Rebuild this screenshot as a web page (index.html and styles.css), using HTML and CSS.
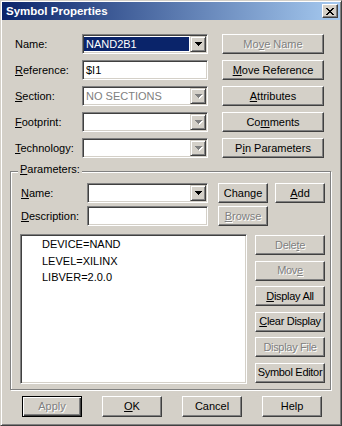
FILE: index.html
```html
<!DOCTYPE html>
<html lang="en">
<head>
    <meta charset="UTF-8">
    <title>Symbol Properties</title>
    <link rel="stylesheet" href="styles.css">
</head>
<body>
<div class="window">
    <div class="titlebar">
        <span class="title">Symbol Properties</span>
        <button class="close">
            <svg width="8" height="7" viewBox="0 0 8 7" shape-rendering="crispEdges"><path d="M0 0h2v1H0z M6 0h2v1H6z M1 1h2v1H1z M5 1h2v1H5z M2 2h4v1H2z M3 3h2v1H3z M2 4h4v1H2z M1 5h2v1H1z M5 5h2v1H5z M0 6h2v1H0z M6 6h2v1H6z" fill="#000"/></svg>
        </button>
    </div>

    <div class="content">
        <div class="fields">
            <span class="label">Name:</span>
            <div class="field combo">
                <span class="combo-text selected">NAND2B1</span>
                <span class="drop"><svg width="7" height="4" viewBox="0 0 7 4" shape-rendering="crispEdges"><path d="M0 0h7v1H0z M1 1h5v1H1z M2 2h3v1H2z M3 3h1v1H3z" fill="#000"/></svg></span>
            </div>
            <button class="btn disabled">Mo<u>v</u>e Name</button>

            <span class="label"><u>R</u>eference:</span>
            <div class="field text">$I1</div>
            <button class="btn"><u>M</u>ove Reference</button>

            <span class="label"><u>S</u>ection:</span>
            <div class="field combo">
                <span class="combo-text grey">NO SECTIONS</span>
                <span class="drop off"><svg width="8" height="5" viewBox="0 0 8 5" shape-rendering="crispEdges"><path d="M1 1h7v1H1z M2 2h5v1H2z M3 3h3v1H3z M4 4h1v1H4z" fill="#fff"/><path d="M0 0h7v1H0z M1 1h5v1H1z M2 2h3v1H2z M3 3h1v1H3z" fill="#808080"/></svg></span>
            </div>
            <button class="btn"><u>A</u>ttributes</button>

            <span class="label"><u>F</u>ootprint:</span>
            <div class="field combo">
                <span class="combo-text"></span>
                <span class="drop off"><svg width="8" height="5" viewBox="0 0 8 5" shape-rendering="crispEdges"><path d="M1 1h7v1H1z M2 2h5v1H2z M3 3h3v1H3z M4 4h1v1H4z" fill="#fff"/><path d="M0 0h7v1H0z M1 1h5v1H1z M2 2h3v1H2z M3 3h1v1H3z" fill="#808080"/></svg></span>
            </div>
            <button class="btn">Co<u>m</u>ments</button>

            <span class="label"><u>T</u>echnology:</span>
            <div class="field combo">
                <span class="combo-text"></span>
                <span class="drop off"><svg width="8" height="5" viewBox="0 0 8 5" shape-rendering="crispEdges"><path d="M1 1h7v1H1z M2 2h5v1H2z M3 3h3v1H3z M4 4h1v1H4z" fill="#fff"/><path d="M0 0h7v1H0z M1 1h5v1H1z M2 2h3v1H2z M3 3h1v1H3z" fill="#808080"/></svg></span>
            </div>
            <button class="btn">P<u>i</u>n Parameters</button>
        </div>

        <div class="group">
            <span class="legend"><u>P</u>arameters:</span>
            <div class="params">
                <span class="label"><u>N</u>ame:</span>
                <div class="field combo">
                    <span class="combo-text"></span>
                    <span class="drop"><svg width="7" height="4" viewBox="0 0 7 4" shape-rendering="crispEdges"><path d="M0 0h7v1H0z M1 1h5v1H1z M2 2h3v1H2z M3 3h1v1H3z" fill="#000"/></svg></span>
                </div>
                <button class="btn">Change</button>
                <button class="btn"><u>A</u>dd</button>

                <span class="label"><u>D</u>escription:</span>
                <div class="field text"></div>
                <button class="btn disabled"><u>B</u>rowse</button>
            </div>

            <div class="list-row">
                <div class="listbox">
                    <div class="item">DEVICE=NAND</div>
                    <div class="item">LEVEL=XILINX</div>
                    <div class="item">LIBVER=2.0.0</div>
                </div>
                <div class="side">
                    <button class="btn disabled">Dele<u>t</u>e</button>
                    <button class="btn disabled">Mov<u>e</u></button>
                    <button class="btn"><u>D</u>isplay All</button>
                    <button class="btn"><u>C</u>lear Display</button>
                    <button class="btn disabled">Display File</button>
                    <button class="btn">Symbol Editor</button>
                </div>
            </div>
        </div>

        <div class="footer">
            <button class="btn default disabled">Apply</button>
            <button class="btn"><u>O</u>K</button>
            <button class="btn">Cancel</button>
            <button class="btn">Help</button>
        </div>
    </div>
</div>
</body>
</html>
```

FILE: styles.css
```css
html, body {
    margin: 0;
}
body {
    background: #d4d0c8;
    font: 11px/13px "Liberation Sans", Arial, sans-serif;
    color: #000;
}
.window {
    width: 342px;
    height: 426px;
    box-sizing: border-box;
    border: 1px solid;
    border-color: #d4d0c8 #404040 #404040 #d4d0c8;
    box-shadow: inset 1px 1px #fff, inset -1px -1px #808080;
    padding: 1px;
    background: #d4d0c8;
}
.titlebar {
    height: 18px;
    display: flex;
    align-items: center;
    padding: 0 2px 0 4px;
    background: linear-gradient(to right, #0a246a, #a6caf0);
}
.title {
    flex: 1;
    color: #fff;
    font-weight: bold;
    font-size: 11.5px;
}
.close {
    width: 16px;
    height: 14px;
    box-sizing: border-box;
    padding: 0;
    display: flex;
    align-items: center;
    justify-content: center;
    background: #d4d0c8;
    border: 1px solid;
    border-color: #fff #404040 #404040 #fff;
    box-shadow: inset -1px -1px #808080;
}
.content {
    padding: 14px 0 0 13px;
}

/* shared controls */
.btn {
    box-sizing: border-box;
    height: 20px;
    padding: 0;
    font: inherit;
    color: #000;
    white-space: nowrap;
    background: #d4d0c8;
    border: 1px solid;
    border-color: #fff #404040 #404040 #fff;
    box-shadow: inset -1px -1px #808080;
}
.btn.disabled {
    color: #808080;
    text-shadow: 1px 1px 0 #fff;
}
.btn.default {
    border-color: #000;
    box-shadow: inset 1px 1px #fff, inset -1px -1px #404040, inset -2px -2px #808080;
}
.field {
    box-sizing: border-box;
    height: 20px;
    border: 1px solid;
    border-color: #808080 #fff #fff #808080;
    box-shadow: inset 1px 1px #404040, inset -1px -1px #d4d0c8;
    background: #fff;
}
.field.text {
    padding: 0 3px;
    display: flex;
    align-items: center;
}
.combo {
    display: flex;
    padding: 1px;
}
.combo-text {
    flex: 1;
    display: flex;
    align-items: center;
    padding: 0 2px;
    margin: 1px 1px 1px 0;
}
.combo-text.selected {
    background: #0a246a;
    color: #fff;
}
.combo-text.grey {
    color: #808080;
}
.drop {
    width: 16px;
    box-sizing: border-box;
    display: flex;
    align-items: center;
    justify-content: center;
    border: 1px solid;
    border-color: #d4d0c8 #404040 #404040 #d4d0c8;
    box-shadow: inset 1px 1px #fff, inset -1px -1px #808080;
    background: #d4d0c8;
}
.drop.off svg {
    margin-left: 1px;
    margin-top: 1px;
}

/* top block */
.fields {
    display: grid;
    grid-template-columns: 67px 126px 116px;
    grid-auto-rows: 20px;
    row-gap: 6px;
    align-items: center;
}
.fields .btn {
    width: 102px;
    margin-left: 14px;
}

/* parameters group */
.group {
    position: relative;
    box-sizing: border-box;
    width: 321px;
    margin: 13px 0 0 -5px;
    padding: 11px 5px 5px 10px;
    border: 1px solid #808080;
    box-shadow: inset 1px 1px #fff, 1px 1px #fff;
}
.legend {
    position: absolute;
    top: -9px;
    left: 7px;
    padding: 0 2px;
    background: #d4d0c8;
}
.params {
    display: grid;
    grid-template-columns: 66px 131px 57px 50px;
    grid-auto-rows: 20px;
    row-gap: 3px;
    align-items: center;
}
.params .field {
    width: 121px;
}
.params .btn {
    width: 50px;
}
.list-row {
    display: flex;
    gap: 8px;
    margin: 8px 0 0 -1px;
}
.listbox {
    box-sizing: border-box;
    width: 227px;
    height: 150px;
    padding: 1px 0 0 21px;
    border: 1px solid;
    border-color: #808080 #fff #fff #808080;
    box-shadow: inset 1px 1px #404040, inset -1px -1px #d4d0c8;
    background: #fff;
}
.item {
    line-height: 16.5px;
}
.side {
    width: 70px;
    height: 150px;
    box-sizing: border-box;
    padding: 1px 0;
    display: flex;
    flex-direction: column;
    justify-content: space-between;
}
.side .btn {
    letter-spacing: -0.3px;
}

/* bottom buttons */
.footer {
    display: flex;
    gap: 20px;
    margin: 6px 0 0 7px;
}
.footer .btn {
    width: 60px;
    height: 21px;
}
```
